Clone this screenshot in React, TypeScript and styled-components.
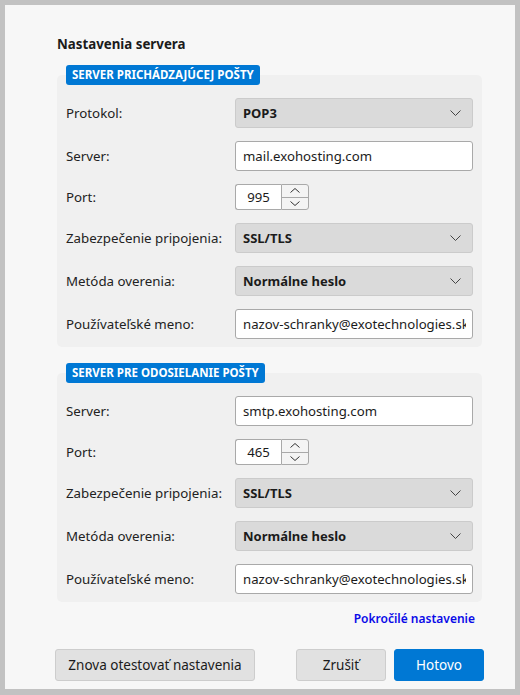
import React from 'react';
import styled, { createGlobalStyle } from 'styled-components';

const GlobalStyle = createGlobalStyle`
  html, body {
    margin: 0;
    padding: 0;
    background: #c2c2c2;
  }
  body {
    font-family: 'Noto Sans', 'Liberation Sans', sans-serif;
    color: #1b1b1b;
  }
`;

const Window = styled.div`
  box-sizing: border-box;
  display: flex;
  flex-direction: column;
  width: 510px;
  height: 684px;
  margin: 5px;
  padding: 30px 33px 8px 52px;
  background: #f7f7f7;
`;

const Title = styled.h1`
  margin: 0 0 12px 0;
  font-size: 13.3px;
  line-height: 18px;
  font-weight: 700;
`;

const Section = styled.section<{ $gap?: number }>`
  display: flex;
  flex-direction: column;
  align-items: flex-start;
  margin-top: ${p => p.$gap ?? 0}px;
`;

const Badge = styled.div`
  position: relative;
  z-index: 1;
  margin: 0 0 -10px 9px;
  padding: 0 6px;
  height: 20px;
  line-height: 20px;
  border-radius: 3px;
  background: #0078d4;
  color: #fff;
  font-size: 11.5px;
  font-weight: 700;
`;

const Panel = styled.div`
  box-sizing: border-box;
  align-self: stretch;
  display: grid;
  grid-template-columns: 169px 1fr;
  row-gap: 13px;
  align-items: center;
  padding: 23px 9px 8px 9px;
  border-radius: 5px;
  background: #f0f0f0;
`;

const Label = styled.label`
  font-size: 13.3px;
  color: #222;
`;

const Select = styled.div`
  box-sizing: border-box;
  display: flex;
  align-items: center;
  justify-content: space-between;
  height: 30px;
  padding: 0 11px 0 7px;
  border: 1px solid #cbcbcb;
  border-radius: 3px;
  background: #dadada;
  font-size: 13px;
  font-weight: 700;
  color: #1b1b1b;
`;

const TextInput = styled.input`
  box-sizing: border-box;
  width: 100%;
  height: 30px;
  padding: 0 6px 0 7px;
  border: 1px solid #a9a9a9;
  border-radius: 3px;
  background: #fff;
  font-family: inherit;
  font-size: 13.2px;
  color: #1b1b1b;
  outline: none;
`;

const PortBox = styled.div`
  display: flex;
  height: 26px;
  width: 74px;
`;

const PortValue = styled.div`
  box-sizing: border-box;
  width: 46px;
  height: 100%;
  display: flex;
  align-items: center;
  justify-content: center;
  border: 1px solid #a9a9a9;
  border-right: none;
  border-radius: 3px 0 0 3px;
  background: #fff;
  font-size: 13.2px;
`;

const Spinner = styled.div`
  box-sizing: border-box;
  width: 28px;
  height: 100%;
  display: flex;
  flex-direction: column;
  border: 1px solid #a9a9a9;
  border-radius: 0 3px 3px 0;
  background: #f4f4f4;
`;

const SpinHalf = styled.div<{ $down?: boolean }>`
  flex: 1;
  display: flex;
  align-items: center;
  justify-content: center;
  border-top: ${p => (p.$down ? '1px solid #a9a9a9' : 'none')};
`;

const LinkRow = styled.div`
  display: flex;
  justify-content: flex-end;
  padding: 8px 7px 0 0;
`;

const Link = styled.a`
  font-size: 12px;
  font-weight: 600;
  color: #0a0ae8;
  text-decoration: none;
`;

const Footer = styled.div`
  display: flex;
  align-items: center;
  margin: auto -2px 0 -2px;
  gap: 8px;
`;

const Button = styled.button<{ $primary?: boolean; $width: number }>`
  box-sizing: border-box;
  width: ${p => p.$width}px;
  height: 32px;
  border: 1px solid ${p => (p.$primary ? '#0078d4' : '#cdcdcd')};
  border-radius: 3px;
  background: ${p => (p.$primary ? '#0078d4' : '#e1e1e1')};
  color: ${p => (p.$primary ? '#fff' : '#1b1b1b')};
  font-family: inherit;
  font-size: 13.5px;
`;

const Spacer = styled.div`
  flex: 1;
`;

const Chevron = () => (
  <svg width="11" height="6" viewBox="0 0 11 6">
    <path d="M0.5 0.5 L5.5 5.5 L10.5 0.5" fill="none" stroke="#444" strokeWidth="1" />
  </svg>
);

const SpinArrow = ({ up }: { up?: boolean }) => (
  <svg width="10" height="5" viewBox="0 0 10 5">
    <path
      d={up ? 'M0.5 4.5 L5 0.5 L9.5 4.5' : 'M0.5 0.5 L5 4.5 L9.5 0.5'}
      fill="none"
      stroke="#333"
      strokeWidth="1"
    />
  </svg>
);

const Dropdown = ({ value }: { value: string }) => (
  <Select>
    <span>{value}</span>
    <Chevron />
  </Select>
);

const Port = ({ value }: { value: string }) => (
  <PortBox>
    <PortValue>{value}</PortValue>
    <Spinner>
      <SpinHalf>
        <SpinArrow up />
      </SpinHalf>
      <SpinHalf $down>
        <SpinArrow />
      </SpinHalf>
    </Spinner>
  </PortBox>
);

const USER = 'nazov-schranky@exotechnologies.sk';

export default function App() {
  return (
    <>
      <GlobalStyle />
      <Window>
        <Title>Nastavenia servera</Title>

        <Section>
          <Badge>SERVER PRICHÁDZAJÚCEJ POŠTY</Badge>
          <Panel>
            <Label>Protokol:</Label>
            <Dropdown value="POP3" />
            <Label>Server:</Label>
            <TextInput readOnly value="mail.exohosting.com" />
            <Label>Port:</Label>
            <Port value="995" />
            <Label>Zabezpečenie pripojenia:</Label>
            <Dropdown value="SSL/TLS" />
            <Label>Metóda overenia:</Label>
            <Dropdown value="Normálne heslo" />
            <Label>Používateľské meno:</Label>
            <TextInput readOnly value={USER} />
          </Panel>
        </Section>

        <Section $gap={16}>
          <Badge>SERVER PRE ODOSIELANIE POŠTY</Badge>
          <Panel>
            <Label>Server:</Label>
            <TextInput readOnly value="smtp.exohosting.com" />
            <Label>Port:</Label>
            <Port value="465" />
            <Label>Zabezpečenie pripojenia:</Label>
            <Dropdown value="SSL/TLS" />
            <Label>Metóda overenia:</Label>
            <Dropdown value="Normálne heslo" />
            <Label>Používateľské meno:</Label>
            <TextInput readOnly value={USER} />
          </Panel>
        </Section>

        <LinkRow>
          <Link href="#">Pokročilé nastavenie</Link>
        </LinkRow>

        <Footer>
          <Button $width={200}>Znova otestovať nastavenia</Button>
          <Spacer />
          <Button $width={90}>Zrušiť</Button>
          <Button $primary $width={90}>Hotovo</Button>
        </Footer>
      </Window>
    </>
  );
}
